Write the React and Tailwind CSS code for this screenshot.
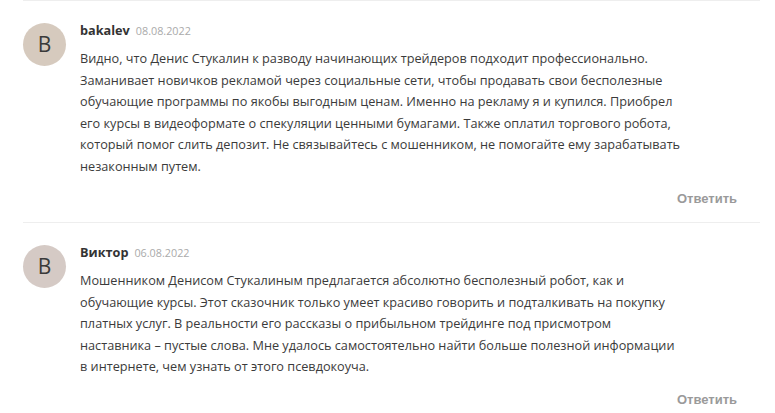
const comments = [
  {
    name: 'bakalev',
    date: '08.08.2022',
    avatar: 'bg-[#d6cabe]',
    lines: [
      'Видно, что Денис Стукалин к разводу начинающих трейдеров подходит профессионально.',
      'Заманивает новичков рекламой через социальные сети, чтобы продавать свои бесполезные',
      'обучающие программы по якобы выгодным ценам. Именно на рекламу я и купился. Приобрел',
      'его курсы в видеоформате о спекуляции ценными бумагами. Также оплатил торгового робота,',
      'который помог слить депозит. Не связывайтесь с мошенником, не помогайте ему зарабатывать',
      'незаконным путем.',
    ],
  },
  {
    name: 'Виктор',
    date: '06.08.2022',
    avatar: 'bg-[#d5cac5]',
    lines: [
      'Мошенником Денисом Стукалиным предлагается абсолютно бесполезный робот, как и',
      'обучающие курсы. Этот сказочник только умеет красиво говорить и подталкивать на покупку',
      'платных услуг. В реальности его рассказы о прибыльном трейдинге под присмотром',
      'наставника – пустые слова. Мне удалось самостоятельно найти больше полезной информации',
      'в интернете, чем узнать от этого псевдокоуча.',
    ],
  },
];

function Comment({ c }) {
  return (
    <div className="flex border-t border-[#eeeeee] pt-[19px] pb-[13px]">
      <div className={`mt-[3px] w-[43px] h-[43px] rounded-full ${c.avatar} flex items-center justify-center shrink-0`}>
        <span className="text-[21px] text-[#3a3a3a] leading-none">В</span>
      </div>
      <div className="ml-[14px] flex-1">
        <div className="flex items-baseline gap-[6px] leading-[20px]">
          <span className="text-[12.7px] font-bold text-[#333]">{c.name}</span>
          <span className="text-[10.8px] text-[#aaaaaa]">{c.date}</span>
        </div>
        <p className="mt-[7px] text-[12.7px] leading-[21.5px] text-[#3b3b3b]">
          {c.lines.map((l, i) => (
            <span key={i} className="block whitespace-nowrap">{l}</span>
          ))}
        </p>
        <div className="mt-[12px] flex justify-end pr-[23px] leading-[20px]">
          <button className="text-[13px] font-bold text-[#9a9a9a] font-['Liberation_Sans',Arial,sans-serif]">Ответить</button>
        </div>
      </div>
    </div>
  );
}

export default function App() {
  return (
    <div className="bg-white min-h-[413px] font-['Open_Sans',sans-serif]">
      <div className="ml-[23px] w-[737px]">
        {comments.map((c) => (
          <Comment key={c.name} c={c} />
        ))}
      </div>
    </div>
  );
}
